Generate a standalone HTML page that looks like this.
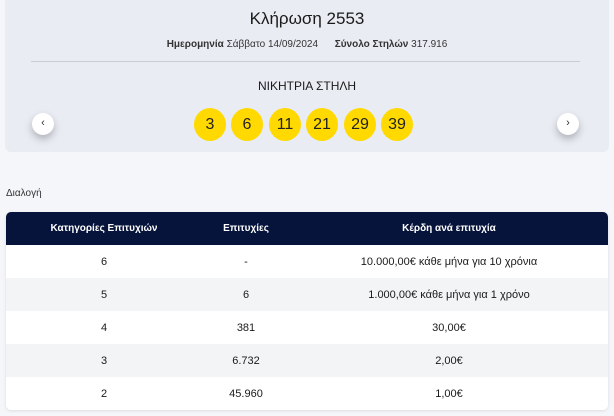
<!DOCTYPE html>
<html><head><meta charset="utf-8"><style>
*{margin:0;padding:0;box-sizing:border-box}
body{width:614px;height:416px;background:#f5f6f9;font-family:"Liberation Sans","Noto Sans CJK SC",sans-serif;color:#1a1a1a;position:relative;overflow:hidden}
.card{position:absolute;left:5px;top:0;width:604px;height:152px;background:#e9ecf3;border-radius:0 0 6px 6px}
.t{position:absolute;left:0;width:614px;text-align:center}
.line{position:absolute;left:31px;top:61px;width:549px;height:1px;background:#c9ccd4}
.ball{position:absolute;top:108px;width:32px;height:33px;border-radius:50%;background:#ffd900;text-align:center;line-height:33px;font-size:16px;color:#222}
.arr{position:absolute;top:113px;width:22px;height:22px;border-radius:50%;background:#fff;box-shadow:0 4px 8px rgba(0,0,0,.25);text-align:center;line-height:21px;font-size:11px;color:#333}
table{position:absolute;left:6px;top:212px;width:602px;border-collapse:collapse;border-radius:5px;overflow:hidden;box-shadow:0 1px 3px rgba(0,0,0,.1)}
th{background:#06133a;color:#fff;font-size:10px;font-weight:bold;height:33px}
td{height:33px;text-align:center;font-size:11px;background:#fff}
tr:nth-child(odd) td{background:#f3f4f6}
</style></head><body>
<div class="card"></div>
<div class="t" style="top:9px;font-size:17px">Κλήρωση 2553</div>
<div class="t" style="top:39px;font-size:10px;color:#333"><b>Ημερομηνία</b> Σάββατο 14/09/2024 &nbsp;&nbsp;&nbsp;&nbsp; <b>Σύνολο Στηλών</b> 317.916</div>
<div class="line"></div>
<div class="t" style="top:79px;font-size:12px">ΝΙΚΗΤΡΙΑ ΣΤΗΛΗ</div>
<div class="ball" style="left:194px">3</div>
<div class="ball" style="left:231px">6</div>
<div class="ball" style="left:269px">11</div>
<div class="ball" style="left:306px">21</div>
<div class="ball" style="left:344px">29</div>
<div class="ball" style="left:381px">39</div>
<div class="arr" style="left:32px">‹</div>
<div class="arr" style="left:557px">›</div>
<div style="position:absolute;left:6px;top:188px;font-size:10px;color:#333">Διαλογή</div>
<table>
<colgroup><col style="width:196px"><col style="width:88px"><col></colgroup>
<tr><th>Κατηγορίες Επιτυχιών</th><th>Επιτυχίες</th><th>Κέρδη ανά επιτυχία</th></tr>
<tr><td>6</td><td>-</td><td>10.000,00€ κάθε μήνα για 10 χρόνια</td></tr>
<tr><td>5</td><td>6</td><td>1.000,00€ κάθε μήνα για 1 χρόνο</td></tr>
<tr><td>4</td><td>381</td><td>30,00€</td></tr>
<tr><td>3</td><td>6.732</td><td>2,00€</td></tr>
<tr><td>2</td><td>45.960</td><td>1,00€</td></tr>
</table>
</body></html>
